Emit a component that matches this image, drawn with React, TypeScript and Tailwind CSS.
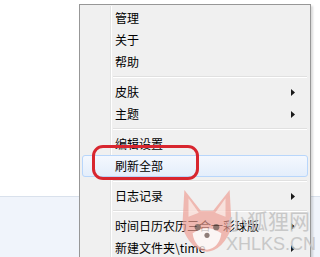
import React from 'react';

type Item = { label?: string; sub?: boolean; hot?: boolean; sep?: boolean };

const items: Item[] = [
  { label: '管理' },
  { label: '关于' },
  { label: '帮助' },
  { sep: true },
  { label: '皮肤', sub: true },
  { label: '主题', sub: true },
  { sep: true },
  { label: '编辑设置' },
  { label: '刷新全部', hot: true },
  { sep: true },
  { label: '日志记录', sub: true },
  { sep: true },
  { label: '时间日历农历三合一彩球版', sub: true },
  { label: '新建文件夹\\time', sub: true },
];

function Arrow() {
  return (
    <svg width="4" height="7" viewBox="0 0 4 7" className="block">
      <path d="M0 0 L4 3.5 L0 7 Z" fill="#1a1a1a" />
    </svg>
  );
}

function Fox() {
  return (
    <svg width="58" height="72" viewBox="0 0 56 70" className="block">
      <path d="M6 4 L22 24 L34 24 L50 4 L52 40 Q44 62 28 64 Q12 62 4 40 Z" fill="#ef9f94" opacity="0.85" />
      <path d="M10 12 L20 26 L10 30 Z" fill="#fbe3de" opacity="0.9" />
      <path d="M46 12 L36 26 L46 30 Z" fill="#fbe3de" opacity="0.9" />
      <path d="M14 46 Q28 36 42 46 Q40 60 28 62 Q16 60 14 46 Z" fill="#ffffff" opacity="0.9" />
      <circle cx="19" cy="40" r="3" fill="#5e4640" opacity="0.85" />
      <circle cx="37" cy="40" r="3" fill="#5e4640" opacity="0.85" />
      <circle cx="28" cy="48" r="2.5" fill="#5e4640" opacity="0.85" />
    </svg>
  );
}

export default function App() {
  return (
    <div
      className="relative w-[320px] h-[257px] overflow-hidden bg-white"
      style={{ fontFamily: '"Microsoft YaHei", "Noto Sans CJK SC", sans-serif' }}
    >
      {/* page behind the menu */}
      <div className="flex flex-col h-full">
        <div className="h-[197px] bg-white border-b border-[#d9e1ec]" />
        <div className="flex-1 bg-[#f0f4fb]" />
      </div>

      {/* context menu */}
      <div className="absolute left-[79px] top-[4px] w-[232px] h-[260px] border border-[#979797] bg-[#f0f0f0] shadow-[2px_2px_2px_rgba(0,0,0,0.15)] p-[1px]">
        <div className="relative flex flex-col pt-[1px]">
          <div className="absolute left-[29px] top-0 bottom-[-10px] w-[1px] bg-[#e2e3e3]" />
          <div className="absolute left-[30px] top-0 bottom-[-10px] w-[1px] bg-white" />
          {items.map((it, i) =>
            it.sep ? (
              <div key={i} className="h-[8px] flex flex-col justify-center pl-[32px] pr-[2px]">
                <div className="h-[1px] bg-[#e0e0e0]" />
                <div className="h-[1px] bg-white" />
              </div>
            ) : (
              <div
                key={i}
                className={
                  'relative h-[22px] flex items-center pl-[32px] pr-[12px] text-[12px] text-black mx-[1px] rounded-[3px] border ' +
                  (it.hot
                    ? 'border-[#b8d6fb] bg-gradient-to-b from-[#f4f8fe] to-[#e4eefb]'
                    : 'border-transparent')
                }
              >
                <span className="flex-1 whitespace-nowrap">{it.label}</span>
                {it.sub && <Arrow />}
              </div>
            )
          )}
        </div>
      </div>

      {/* red annotation */}
      <div className="absolute left-[92px] top-[145px] w-[107px] h-[35px] rounded-[11px] border-[3.5px] border-[#d8262f]" />

      {/* watermark */}
      <div className="absolute left-[178px] top-[186px] opacity-80">
        <Fox />
      </div>
      <div className="absolute left-[226px] top-[210px] flex flex-col items-start leading-none text-[#c4c4c4] opacity-90 whitespace-nowrap">
        <span className="text-[21px] whitespace-nowrap">小狐狸网</span>
        <span className="text-[18px] mt-[4px] whitespace-nowrap" style={{ fontFamily: '"Liberation Sans", Arial, sans-serif' }}>XHLKS.CN</span>
      </div>
    </div>
  );
}
